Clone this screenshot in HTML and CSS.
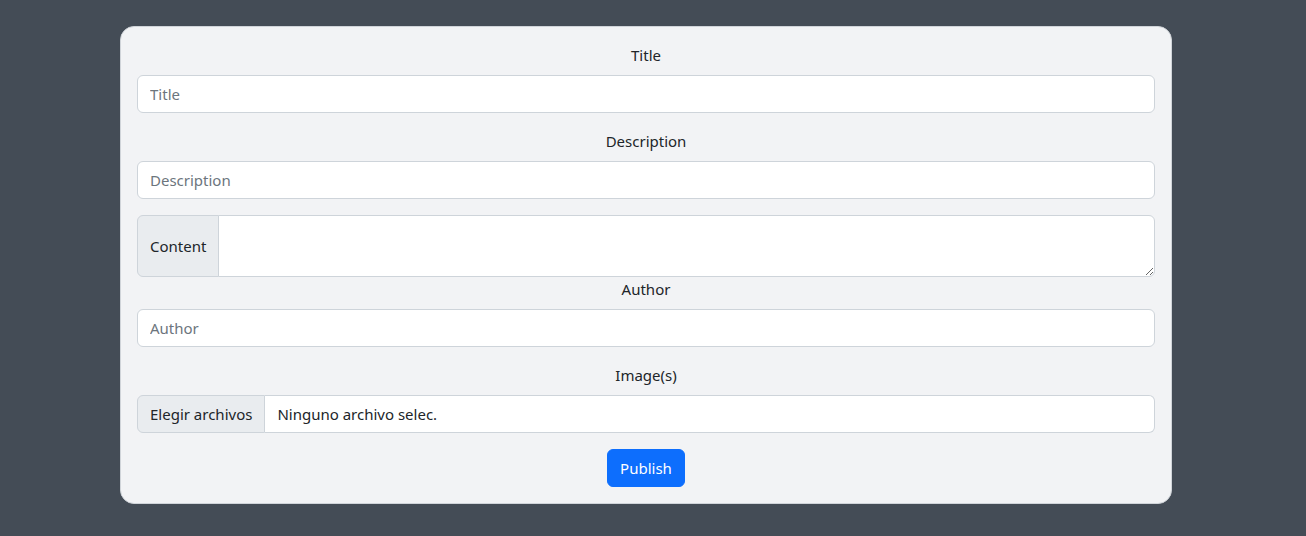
FILE: index.html
```html
<!DOCTYPE html>
<html lang="es">
<head>
<meta charset="utf-8">
<title>Publish</title>
<link rel="stylesheet" href="styles.css">
</head>
<body>
<main class="page">
  <form class="card">
    <label class="label" for="title">Title</label>
    <input class="control mb" id="title" type="text" placeholder="Title">

    <label class="label" for="desc">Description</label>
    <input class="control mb" id="desc" type="text" placeholder="Description">

    <div class="group">
      <span class="addon">Content</span>
      <textarea class="control area" rows="2"></textarea>
    </div>

    <label class="label" for="author">Author</label>
    <input class="control mb" id="author" type="text" placeholder="Author">

    <label class="label">Image(s)</label>
    <div class="group file mb">
      <span class="addon">Elegir archivos</span>
      <span class="file-name">Ninguno archivo selec.</span>
    </div>

    <div class="actions">
      <button class="btn" type="button">Publish</button>
    </div>
  </form>
</main>
</body>
</html>
```

FILE: styles.css
```css
* { box-sizing: border-box; }
html, body {
  margin: 0;
  padding: 0;
  height: 100%;
}
body {
  background: #444c56;
  font-family: "Noto Sans", "Segoe UI", "Liberation Sans", sans-serif;
  font-size: 15px;
  line-height: 24px;
  color: #212529;
}
.page {
  padding: 26px 135px 0 120px;
}
.card {
  display: flex;
  flex-direction: column;
  width: 1052px;
  background: #f2f3f5;
  border: 1px solid #d0d4d9;
  border-radius: 14px;
  padding: 16px;
}
.label {
  display: block;
  text-align: center;
  margin-bottom: 8px;
  height: 24px;
  line-height: 24px;
}
.control {
  display: block;
  width: 100%;
  height: 38px;
  padding: 6px 12px;
  font: inherit;
  line-height: 24px;
  color: #212529;
  background: #fff;
  border: 1px solid #ced4da;
  border-radius: 6px;
  outline: none;
}
.control::placeholder { color: #6c757d; opacity: 1; }
.mb { margin-bottom: 16px; }
.group {
  display: flex;
  align-items: stretch;
  width: 100%;
}
.addon {
  display: flex;
  align-items: center;
  padding: 6px 12px;
  background: #e9ecef;
  border: 1px solid #ced4da;
  border-radius: 6px 0 0 6px;
  white-space: nowrap;
  color: #212529;
}
.area {
  flex: 1;
  height: 62px;
  min-height: 62px;
  resize: vertical;
  margin-left: -1px;
  border-radius: 0 6px 6px 0;
}
.file {
  height: 38px;
}
.file-name {
  flex: 1;
  display: flex;
  align-items: center;
  padding: 6px 12px;
  background: #fff;
  border: 1px solid #ced4da;
  border-left: none;
  border-radius: 0 6px 6px 0;
}
.actions {
  display: flex;
  justify-content: center;
}
.btn {
  font: inherit;
  line-height: 24px;
  height: 38px;
  color: #fff;
  background: #0d6efd;
  border: 1px solid #0d6efd;
  border-radius: 6px;
  padding: 6px 12px;
  cursor: pointer;
}
```
